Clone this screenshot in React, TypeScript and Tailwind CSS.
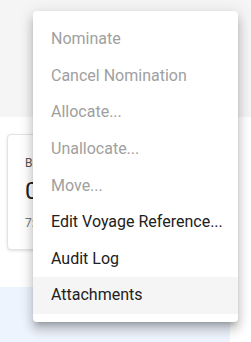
const ITEMS: { label: string; disabled?: boolean; active?: boolean }[] = [
  { label: "Nominate", disabled: true },
  { label: "Cancel Nomination", disabled: true },
  { label: "Allocate...", disabled: true },
  { label: "Unallocate...", disabled: true },
  { label: "Move...", disabled: true },
  { label: "Edit Voyage Reference..." },
  { label: "Audit Log" },
  { label: "Attachments", active: true },
];

export default function App() {
  return (
    <div className="relative h-[342px] w-[251px] overflow-hidden bg-white font-['Roboto',sans-serif]">
      <div className="h-[117px] bg-[#f5f5f5]" />

      <div className="h-[170px] px-[7px] pt-[17px]">
        <div className="flex h-[116px] w-[210px] flex-col rounded border border-[#e3e3e3] bg-white pl-[17px] pt-[20px] shadow-[0_1px_3px_rgba(0,0,0,0.12)]">
          <span className="text-[12px] leading-4 text-[#555]">Bunkers</span>
          <span className="mt-[4px] text-[24px] leading-8 text-[#212121]">0</span>
          <span className="mt-[8px] text-[12px] leading-4 text-[#777]">7:00</span>
        </div>
      </div>

      <div className="h-[55px] w-[230px] bg-[#eef4fd]" />

      <div className="absolute left-[33px] top-[11px] w-[205px] rounded bg-white pb-2 pt-[10px] shadow-[0_5px_5px_-3px_rgba(0,0,0,0.2),0_8px_10px_1px_rgba(0,0,0,0.14),0_3px_14px_2px_rgba(0,0,0,0.12)]">
        {ITEMS.map((item) => (
          <div
            key={item.label}
            className={`flex h-[36.6px] items-center whitespace-nowrap pl-[18px] pr-4 text-[16px] leading-6 ${
              item.disabled ? "text-[#a0a0a0]" : "text-[#212121]"
            } ${item.active ? "bg-[#f5f5f5]" : ""}`}
          >
            {item.label}
          </div>
        ))}
      </div>
    </div>
  );
}
